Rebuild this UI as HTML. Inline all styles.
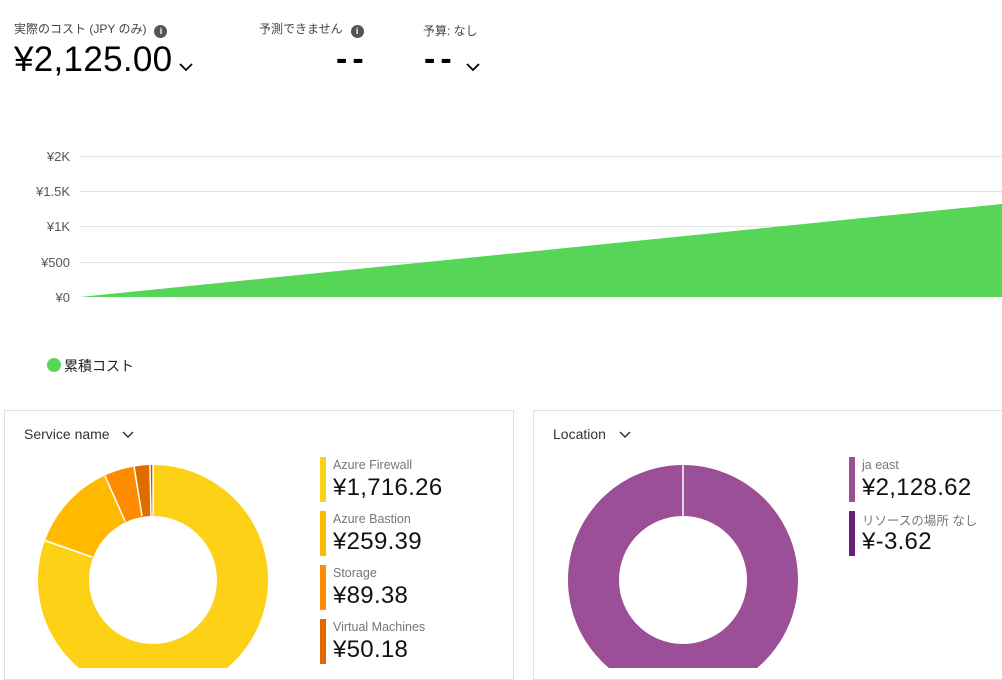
<!DOCTYPE html><html><head><meta charset="utf-8"><style>
body{margin:0;width:1002px;height:668px;overflow:hidden;background:#fff;font-family:"Liberation Sans","Noto Sans CJK JP",sans-serif;position:relative;color:#000}
.a{position:absolute;white-space:nowrap}
.lbl{font-size:12px;color:#444}
.i{display:inline-block;width:13px;height:13px;border-radius:50%;background:#555;color:#fff;font-size:9px;text-align:center;line-height:13px;font-weight:bold;vertical-align:-1px;margin-left:8px}
.big{font-size:35px;letter-spacing:0.3px}
.dash{font-size:34px;letter-spacing:5px;font-weight:bold}
.card{position:absolute;top:410px;height:270px;border:1px solid #e0e0e0;box-sizing:border-box}
.h{font-size:14px;color:#333}
.bar{position:absolute;width:6px;height:45px}
.ln{font-size:12.5px;color:#777}
.lv{font-size:24px;color:#111;letter-spacing:0.3px}
</style></head><body>
<div class="a lbl" style="left:14px;top:20px">実際のコスト (JPY のみ)<span class="i">i</span></div>
<div class="a big" style="left:14px;top:40px">¥2,125.00</div>
<svg class="a" style="left:179px;top:62px" width="14" height="10"><path d="M1 2l6 6 6-6" stroke="#000" stroke-width="1.8" fill="none"/></svg>
<div class="a lbl" style="left:259px;top:20px">予測できません<span class="i">i</span></div>
<div class="a dash" style="left:336px;top:40px">--</div>
<div class="a lbl" style="left:423px;top:22px">予算: なし</div>
<div class="a dash" style="left:424px;top:40px">--</div>
<svg class="a" style="left:466px;top:62px" width="14" height="10"><path d="M1 2l6 6 6-6" stroke="#000" stroke-width="1.8" fill="none"/></svg>

<svg class="a" style="left:0;top:140px" width="1002" height="170">
<g stroke="#e3e3e3"><line x1="80" x2="1002" y1="16.5" y2="16.5"/><line x1="80" x2="1002" y1="51.5" y2="51.5"/><line x1="80" x2="1002" y1="86.5" y2="86.5"/><line x1="80" x2="1002" y1="122.5" y2="122.5"/></g>
<polygon points="80,157 1002,64 1002,157" fill="#57d557"/>
<g font-size="13" fill="#555" text-anchor="end" font-family="Liberation Sans,sans-serif"><text x="70" y="21">¥2K</text><text x="70" y="56">¥1.5K</text><text x="70" y="91">¥1K</text><text x="70" y="127">¥500</text><text x="70" y="162">¥0</text></g>
</svg>
<div class="a" style="left:47px;top:358px;width:14px;height:14px;border-radius:50%;background:#57d557"></div>
<div class="a" style="left:64px;top:356px;font-size:14px;color:#222">累積コスト</div>

<div class="card" style="left:4px;width:510px"></div>
<div class="card" style="left:533px;width:480px"></div>
<div class="a h" style="left:24px;top:426px">Service name</div>
<svg class="a" style="left:122px;top:430px" width="12" height="9"><path d="M1 2l5 5 5-5" stroke="#333" stroke-width="1.5" fill="none"/></svg>
<div class="a h" style="left:553px;top:426px">Location</div>
<svg class="a" style="left:619px;top:430px" width="12" height="9"><path d="M1 2l5 5 5-5" stroke="#333" stroke-width="1.5" fill="none"/></svg>

<svg class="a" style="left:0;top:400px" width="520" height="268">
<g transform="translate(153,180) rotate(-90)" fill="none" stroke-width="51">
<circle r="89.5" stroke="#fcd116" stroke-dasharray="454.4 600"/>
<circle r="89.5" stroke="#ffb900" stroke-dasharray="68.6 600" stroke-dashoffset="-454.4"/>
<circle r="89.5" stroke="#ff8c00" stroke-dasharray="23.6 600" stroke-dashoffset="-523"/>
<circle r="89.5" stroke="#e06c00" stroke-dasharray="13.3 600" stroke-dashoffset="-546.6"/>
<circle r="89.5" stroke="#d83b01" stroke-dasharray="2.4 600" stroke-dashoffset="-559.9"/>
</g>
<g stroke="#fff" stroke-width="1.5"><line x1="153" y1="65" x2="153" y2="116"/><line x1="40" y1="139" x2="92" y2="157"/><line x1="105" y1="76" x2="125" y2="121"/><line x1="134" y1="66" x2="142" y2="116"/><line x1="150" y1="65" x2="151" y2="116"/></g>
</svg>
<svg class="a" style="left:530px;top:400px" width="300" height="268">
<circle cx="153" cy="180" r="89.5" fill="none" stroke="#9b4f96" stroke-width="51"/>
<line x1="153" y1="65" x2="153" y2="116" stroke="#fff" stroke-width="1.5"/>
</svg>

<div class="bar" style="left:320px;top:457px;background:#fcd116"></div>
<div class="a ln" style="left:333px;top:458px">Azure Firewall</div><div class="a lv" style="left:333px;top:474px">¥1,716.26</div>
<div class="bar" style="left:320px;top:511px;background:#ffb900"></div>
<div class="a ln" style="left:333px;top:512px">Azure Bastion</div><div class="a lv" style="left:333px;top:528px">¥259.39</div>
<div class="bar" style="left:320px;top:565px;background:#ff8c00"></div>
<div class="a ln" style="left:333px;top:566px">Storage</div><div class="a lv" style="left:333px;top:582px">¥89.38</div>
<div class="bar" style="left:320px;top:619px;background:#e06c00"></div>
<div class="a ln" style="left:333px;top:620px">Virtual Machines</div><div class="a lv" style="left:333px;top:636px">¥50.18</div>

<div class="bar" style="left:849px;top:457px;background:#9b4f96"></div>
<div class="a ln" style="left:862px;top:458px">ja east</div><div class="a lv" style="left:862px;top:474px">¥2,128.62</div>
<div class="bar" style="left:849px;top:511px;background:#68217a"></div>
<div class="a ln" style="left:862px;top:510px">リソースの場所 なし</div><div class="a lv" style="left:862px;top:528px">¥-3.62</div>
</body></html>
